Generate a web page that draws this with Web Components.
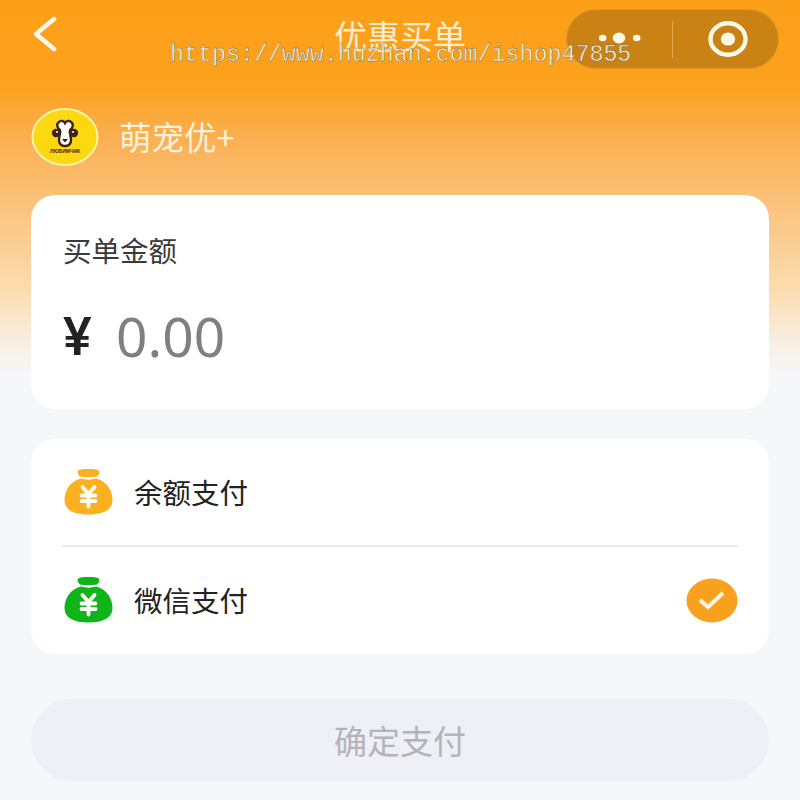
<!DOCTYPE html>
<html lang="zh">
<head>
<meta charset="utf-8">
<title>优惠买单</title>
<style>
    html, body { margin: 0; height: 100%; }
    body {
        width: 800px;
        height: 800px;
        overflow: hidden;
        font-family: "Noto Sans CJK SC", "Noto Sans", sans-serif;
        background: linear-gradient(180deg, #fca01a 0, #fca11d 85px, #fab052 140px, #fac077 195px, #fbdcb0 290px, #f8f0e4 345px, #f6f7fb 375px, #f6f7fb 100%);
    }
</style>
</head>
<body>
<pay-page>
    <top-bar slot="top" heading="优惠买单"></top-bar>
    <store-line name="萌宠优+"></store-line>
    <amount-card label="买单金额" value="0.00"></amount-card>
    <pay-list>
        <pay-row color="#fbb01f" label="余额支付"></pay-row>
        <pay-row color="#10b41a" label="微信支付" checked></pay-row>
    </pay-list>
    <pay-button>确定支付</pay-button>
</pay-page>
<water-mark>https://www.huzhan.com/ishop47855</water-mark>

<script>
class PayPage extends HTMLElement {
    constructor() {
        super();
        this.attachShadow({ mode: 'open' });
    }
    connectedCallback() {
        this.shadowRoot.innerHTML = `
            <style>
                :host { display: block; width: 800px; height: 800px; box-sizing: border-box; }
                .main { display: flex; flex-direction: column; padding: 0 31px; }
            </style>
            <slot name="top"></slot>
            <div class="main"><slot></slot></div>
        `;
    }
}

class TopBar extends HTMLElement {
    constructor() {
        super();
        this.attachShadow({ mode: 'open' });
    }
    connectedCallback() {
        this.shadowRoot.innerHTML = `
            <style>
                :host {
                    display: grid;
                    grid-template-columns: 1fr auto 1fr;
                    align-items: center;
                    height: 60px;
                    padding: 9px 21px 0;
                }
                svg { display: block; margin-left: 11px; margin-top: -10px; }
                h1 {
                    margin: -8px 0 0;
                    font-size: 33px;
                    line-height: 60px;
                    font-weight: 400;
                    color: #fdeed2;
                }
                wx-capsule { justify-self: end; }
            </style>
            <svg width="26" height="38" viewBox="0 0 26 38">
                <path d="M22 4 L4 19 L22 34" fill="none" stroke="#fff8ec" stroke-width="4.6" stroke-linecap="round" stroke-linejoin="round"/>
            </svg>
            <h1>${this.getAttribute('heading')}</h1>
            <wx-capsule></wx-capsule>
        `;
    }
}

class WxCapsule extends HTMLElement {
    constructor() {
        super();
        this.attachShadow({ mode: 'open' });
    }
    connectedCallback() {
        this.shadowRoot.innerHTML = `
            <style>
                :host {
                    display: flex;
                    align-items: center;
                    width: 213px;
                    height: 60px;
                    box-sizing: border-box;
                    background: #c98213;
                    border: 1px solid #e0981f;
                    border-radius: 30px;
                }
                .more, .close { flex: 1 1 0; min-width: 0; display: flex; justify-content: center; align-items: center; }
                .close svg { margin-left: 4px; }
                .line { width: 1px; height: 37px; background: #e3a94f; }
                svg { display: block; }
            </style>
            <div class="more">
                <svg width="48" height="14" viewBox="0 0 48 14">
                    <ellipse cx="6.700" cy="6" rx="3.800" ry="3.200" fill="#fff9e8"/>
                    <ellipse cx="23" cy="6" rx="6.300" ry="5.400" fill="#fff9e8"/>
                    <ellipse cx="40.700" cy="6" rx="3.800" ry="3.200" fill="#fff9e8"/>
                </svg>
            </div>
            <div class="line"></div>
            <div class="close">
                <svg width="42" height="38" viewBox="0 0 42 38">
                    <ellipse cx="21" cy="19" rx="17.500" ry="15.800" fill="none" stroke="#fff9e8" stroke-width="4.400"/>
                    <ellipse cx="21" cy="19" rx="7.200" ry="6.600" fill="#fff9e8"/>
                </svg>
            </div>
        `;
    }
}

class StoreLine extends HTMLElement {
    constructor() {
        super();
        this.attachShadow({ mode: 'open' });
    }
    connectedCallback() {
        this.shadowRoot.innerHTML = `
            <style>
                :host {
                    display: flex;
                    align-items: center;
                    gap: 20px;
                    height: 60px;
                    margin-top: 38px;
                    margin-bottom: 28px;
                }
                .logo { position: relative; width: 68px; height: 60px; flex: none; }
                .logo svg { display: block; }
                .tiny {
                    position: absolute;
                    left: 0; right: 0; top: 41px;
                    text-align: center;
                    font: 700 5px/6px "Liberation Sans", sans-serif;
                    color: #3a2a12;
                }
                .name { font-size: 32.500px; line-height: 40px; color: #fdf1dc; margin-top: -3px; }
            </style>
            <div class="logo">
                <svg width="68" height="60" viewBox="0 0 68 60">
                    <ellipse cx="34" cy="30" rx="32.500" ry="28" fill="#fbd80f" stroke="#fdf3b0" stroke-width="2"/>
                    <circle cx="25" cy="26" r="4.200" fill="#3f2413"/>
                    <circle cx="43" cy="26" r="4.200" fill="#3f2413"/>
                    <circle cx="26" cy="25" r="1" fill="#fff"/>
                    <circle cx="42" cy="25" r="1" fill="#fff"/>
                    <path d="M28 15 C30 13 33 14 34 16 C35 14 38 13 40 15 C43 17 42 21 39 23 C38 25 40 29 40 33 C40 37 38 39 34 39 C30 39 28 37 28 33 C28 29 30 25 29 23 C26 21 25 17 28 15 Z" fill="#fff" stroke="#3f2413" stroke-width="2.400"/>
                    <path d="M31 32 H37 L34 35.500 Z" fill="#3f2413"/>
                </svg>
                <div class="tiny">ЛЮБИМЧИК</div>
            </div>
            <span class="name">${this.getAttribute('name')}</span>
        `;
    }
}

class AmountCard extends HTMLElement {
    constructor() {
        super();
        this.attachShadow({ mode: 'open' });
    }
    connectedCallback() {
        this.shadowRoot.innerHTML = `
            <style>
                :host {
                    display: block;
                    height: 214px;
                    box-sizing: border-box;
                    padding: 35px 32px 0;
                    margin-bottom: 30px;
                    background: #fff;
                    border-radius: 24px;
                }
                .label { font-size: 28.500px; line-height: 40px; color: #3a3a3a; }
                .row { display: flex; align-items: center; gap: 23px; margin-top: 36px; height: 64px; }
                .sign { font: 500 54px/64px Roboto, sans-serif; color: #222; width: 30px; margin-bottom: 2px; }
                .value { font: 400 55px/64px "Noto Sans", sans-serif; color: #808080; margin-bottom: 4px; }
            </style>
            <div class="label">${this.getAttribute('label')}</div>
            <div class="row">
                <span class="sign">¥</span>
                <span class="value">${this.getAttribute('value')}</span>
            </div>
        `;
    }
}

class PayList extends HTMLElement {
    constructor() {
        super();
        this.attachShadow({ mode: 'open' });
    }
    connectedCallback() {
        this.shadowRoot.innerHTML = `
            <style>
                :host {
                    display: block;
                    height: 215px;
                    box-sizing: border-box;
                    padding: 0 31px;
                    margin-bottom: 45px;
                    background: #fff;
                    border-radius: 24px;
                }
            </style>
            <slot></slot>
        `;
    }
}

class PayRow extends HTMLElement {
    constructor() {
        super();
        this.attachShadow({ mode: 'open' });
    }
    connectedCallback() {
        const color = this.getAttribute('color');
        const check = this.hasAttribute('checked') ? `
            <svg class="check" width="52" height="45" viewBox="0 0 52 45">
                <ellipse cx="26" cy="22.500" rx="25.500" ry="22" fill="#f9a11f"/>
                <path d="M14 22 L22 29 L37 15" fill="none" stroke="#fff6e6" stroke-width="4" stroke-linejoin="miter"/>
            </svg>` : '';
        this.shadowRoot.innerHTML = `
            <style>
                :host {
                    display: flex;
                    align-items: center;
                    gap: 21px;
                    height: 107.500px;
                    box-sizing: border-box;
                    padding-left: 2px;
                }
                :host(:not(:last-child)) { border-bottom: 2px solid #ebebeb; }
                .bag { display: block; flex: none; }
                .label { font-size: 28.500px; line-height: 40px; color: #222; }
                .check { margin-left: auto; display: block; }
            </style>
            <svg class="bag" width="49" height="46" viewBox="0 0 49 46">
                <path d="M15 1 C21 -0.500 28 -0.500 34 1 C36 2 36 5 33 7.500 C28 8.500 21 8.500 16 7.500 C13 5 13 2 15 1 Z" fill="${color}"/>
                <path d="M17 9.500 C22 11 27 11 32 9.500 C43 12 48.500 22 48.500 31 C48.500 41 39 45.500 24.500 45.500 C10 45.500 0.500 41 0.500 31 C0.500 22 6 12 17 9.500 Z" fill="${color}"/>
                <path d="M18.500 18 L24.500 25 L30.500 18 M17.500 26.500 H31.500 M17.500 32 H31.500 M24.500 25 V37.500" fill="none" stroke="#fff" stroke-width="3.800" stroke-linecap="round" stroke-linejoin="round"/>
            </svg>
            <span class="label">${this.getAttribute('label')}</span>
            ${check}
        `;
    }
}

class PayButton extends HTMLElement {
    constructor() {
        super();
        this.attachShadow({ mode: 'open' });
    }
    connectedCallback() {
        this.shadowRoot.innerHTML = `
            <style>
                :host {
                    display: flex;
                    align-items: center;
                    justify-content: center;
                    height: 82px;
                    background: #eff0f5;
                    border-radius: 41px;
                    color: #b3b3bd;
                    font-size: 33px;
                }
            </style>
            <slot></slot>
        `;
    }
}

// watermark sits on top of the header, it is not part of the page flow
class WaterMark extends HTMLElement {
    constructor() {
        super();
        this.attachShadow({ mode: 'open' });
    }
    connectedCallback() {
        this.shadowRoot.innerHTML = `
            <style>
                :host {
                    position: absolute;
                    left: 170px;
                    top: 40px;
                    font: 400 23.300px/30px "Liberation Mono", monospace;
                    color: #fff3dc;
                    -webkit-text-stroke: 0.4px #6d5a3c;
                    white-space: nowrap;
                    pointer-events: none;
                }
            </style>
            <slot></slot>
        `;
    }
}

customElements.define('pay-page', PayPage);
customElements.define('top-bar', TopBar);
customElements.define('wx-capsule', WxCapsule);
customElements.define('store-line', StoreLine);
customElements.define('amount-card', AmountCard);
customElements.define('pay-list', PayList);
customElements.define('pay-row', PayRow);
customElements.define('pay-button', PayButton);
customElements.define('water-mark', WaterMark);
</script>
</body>
</html>
